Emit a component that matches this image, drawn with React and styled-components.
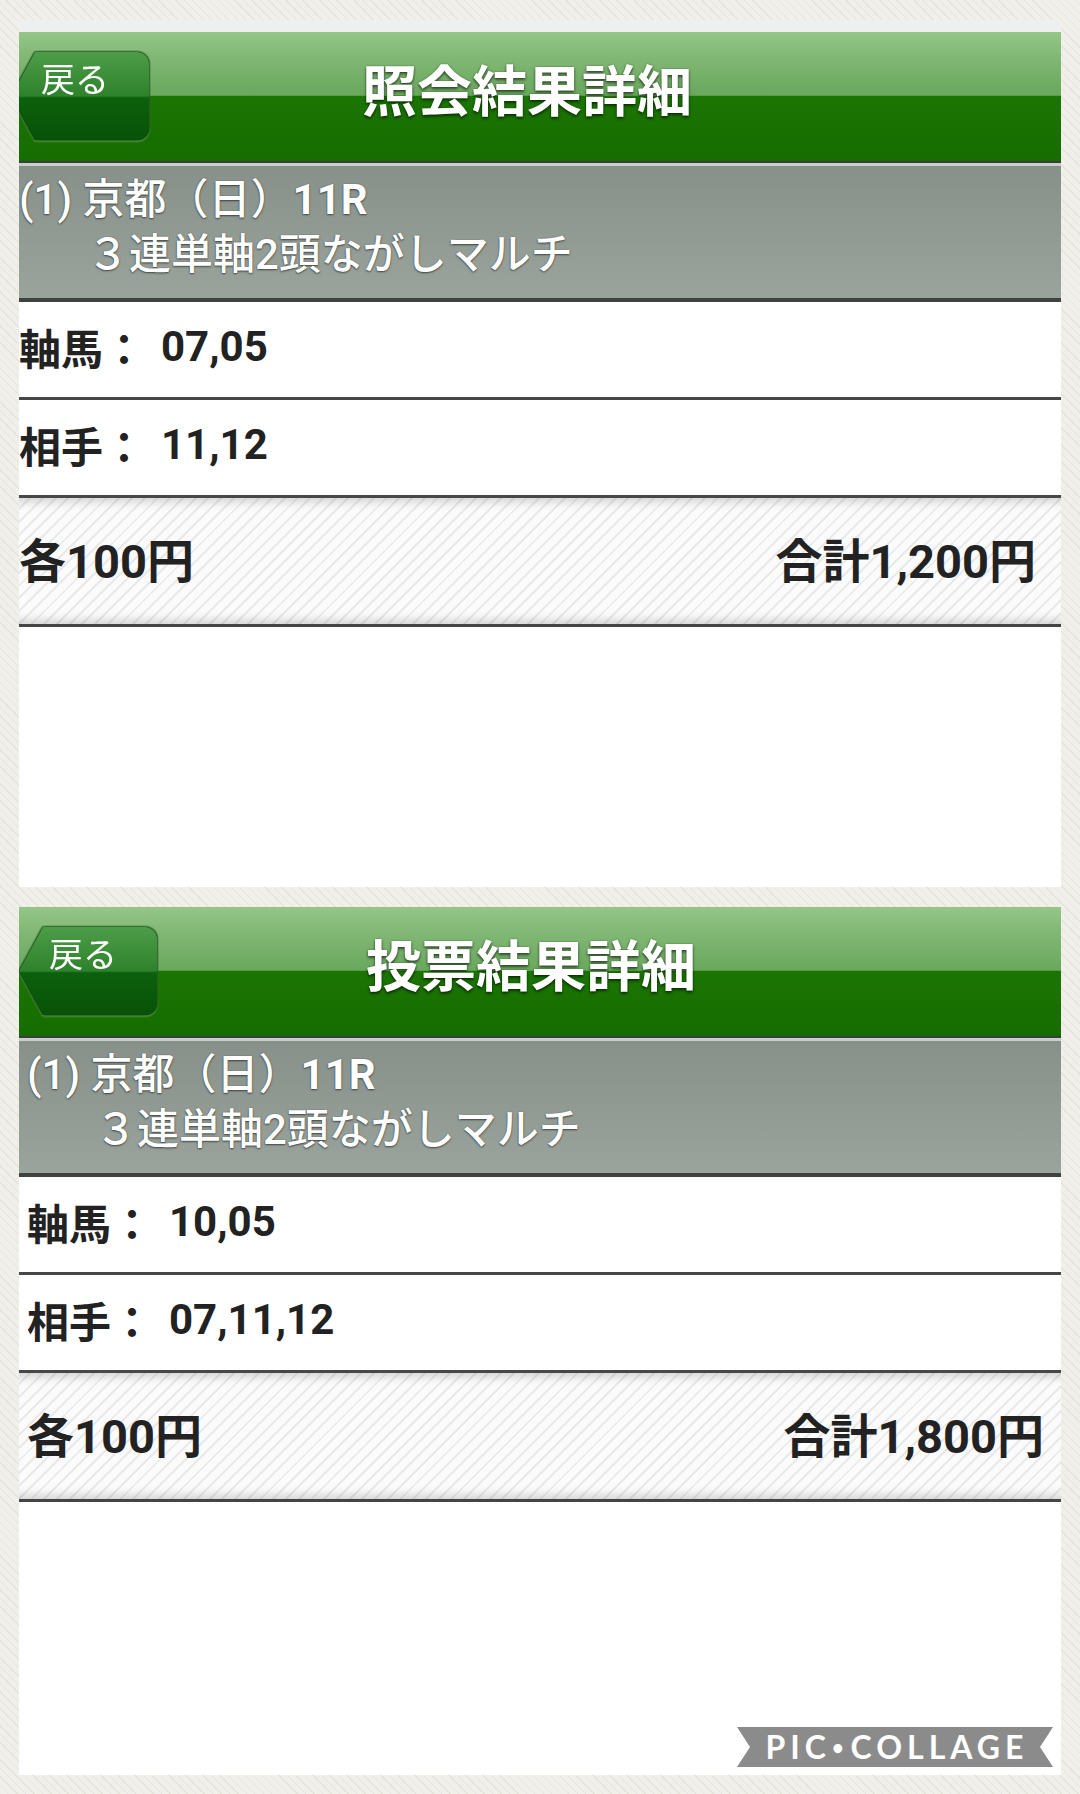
import styled, { createGlobalStyle } from 'styled-components';

const GlobalStyle = createGlobalStyle`
  *, *::before, *::after { box-sizing: border-box; }
  html, body { margin: 0; padding: 0; }
  body {
    background-color: #f0efe9;
    background-image: repeating-linear-gradient(45deg, #e5e3da 0 1px, transparent 1px 6px);
    font-family: Roboto, "Noto Sans CJK JP", sans-serif;
  }
`;

const tickets = [
  { title: '照会結果詳細', shift: 0, band: true, fill: 260, axis: '07,05', partner: '11,12', total: '1,200' },
  { title: '投票結果詳細', shift: 8, band: false, fill: 273, axis: '10,05', partner: '07,11,12', total: '1,800' },
];

const App = () => {
  return (
    <Page>
      <GlobalStyle />
      {tickets.map((t) => (
        <Panel key={t.title} $band={t.band}>
          <Header $shift={t.shift}>
            <BackWrap>
              <BackButton>戻る</BackButton>
            </BackWrap>
            <Title>{t.title}</Title>
          </Header>

          <Info $shift={t.shift}>
            <div>
              (1) 京都（日）<Strong>11R</Strong>
            </div>
            <SubLine>３連単軸2頭ながしマルチ</SubLine>
          </Info>

          <Row $shift={t.shift}>
            軸馬：<Value>{t.axis}</Value>
          </Row>
          <Row $shift={t.shift}>
            相手：<Value>{t.partner}</Value>
          </Row>

          <TotalRow $shift={t.shift}>
            <span>各100円</span>
            <span>合計{t.total}円</span>
          </TotalRow>

          <Filler $h={t.fill} />
        </Panel>
      ))}

      <Watermark>
        PIC<Dot>•</Dot>COLLAGE
      </Watermark>
    </Page>
  );
};

export default App;

const Page = styled.main`
  position: relative;
  width: 1080px;
  min-height: 1794px;
  padding: 20px 19px 0;
  display: flex;
  flex-direction: column;
  gap: 20px;
`;

const Panel = styled.section`
  background: #fff;
  overflow: hidden;
  border-top: ${(p) => (p.$band ? '12px solid #eef0ef' : 'none')};
`;

const Header = styled.header`
  height: 131px;
  display: grid;
  grid-template-columns: 1fr auto 1fr;
  align-items: start;
  padding: 20px 26px 0 ${(p) => p.$shift}px;
  background: linear-gradient(
    to bottom,
    #94c688 0%,
    #7fb673 22%,
    #69a85d 49%,
    #1b7503 50%,
    #166c00 100%
  );
  border-bottom: 2px solid #394039;
`;

const BackWrap = styled.div`
  justify-self: start;
  margin-left: -8px;
  filter: drop-shadow(0 0 1px #063206) drop-shadow(0 0 0.5px #063206) drop-shadow(0 1px 0 #6fb466);
`;

const BackButton = styled.button`
  display: flex;
  align-items: flex-start;
  width: 138px;
  height: 88px;
  padding: 8px 0 0 30px;
  border: none;
  border-radius: 0 12px 12px 0;
  clip-path: polygon(0 50%, 24px 0, 100% 0, 100% 100%, 24px 100%);
  background: linear-gradient(to bottom, #4d9c49 0%, #2f822c 50%, #0c600c 52%, #085208 100%);
  color: #fff;
  font-family: Roboto, "Noto Sans CJK JP", sans-serif;
  font-size: 34px;
  font-weight: 400;
  line-height: 40px;
`;

const Title = styled.h1`
  margin: 7px 0 0;
  color: #fff;
  font-size: 55px;
  font-weight: 700;
  line-height: 66px;
  text-shadow: 0 2px 3px rgba(0, 0, 0, 0.55), 0 0 2px rgba(0, 0, 0, 0.35);
`;

const Info = styled.div`
  height: 139px;
  padding: 8px 0 0 ${(p) => p.$shift}px;
  border-top: 3px solid #c9d0cb;
  border-bottom: 4px solid #3e433f;
  background: linear-gradient(to bottom, #879089, #9aa49d);
  color: #fff;
  font-size: 42px;
  font-weight: 500;
  line-height: 52px;
  white-space: nowrap;
  text-shadow: 0 1px 2px rgba(0, 0, 0, 0.55), 0 0 1px rgba(0, 0, 0, 0.45);
`;

const Strong = styled.span`
  font-weight: 700;
`;

const SubLine = styled.div`
  margin-top: 3px;
  padding-left: 68px;
`;

const Row = styled.div`
  height: 98px;
  display: flex;
  align-items: center;
  padding: 0 0 6px ${(p) => p.$shift}px;
  border-bottom: 3px solid #474747;
  color: #222;
  font-size: 42px;
  font-weight: 700;
`;

const Value = styled.span`
  margin-left: 16px;
`;

const TotalRow = styled.div`
  height: 129px;
  display: flex;
  justify-content: space-between;
  align-items: center;
  padding: 0 ${(p) => 25 - p.$shift}px 8px ${(p) => p.$shift}px;
  border-bottom: 3px solid #444;
  background-color: #fbfbfb;
  background-image: repeating-linear-gradient(-45deg, transparent 0 7px, #e9e9e9 7px 9px);
  box-shadow: inset 0 14px 10px -10px rgba(0, 0, 0, 0.16), inset 0 -14px 10px -10px rgba(0, 0, 0, 0.16);
  color: #222;
  font-size: 47px;
  font-weight: 700;
`;

const Filler = styled.div`
  height: ${(p) => p.$h}px;
  background: #fff;
`;

const Watermark = styled.div`
  position: absolute;
  left: 737px;
  top: 1727px;
  width: 316px;
  height: 40px;
  display: flex;
  align-items: center;
  justify-content: center;
  padding-left: 4px;
  background: #8b8b8b;
  clip-path: polygon(0 0, 100% 0, calc(100% - 13px) 50%, 100% 100%, 0 100%, 13px 50%);
  color: #fff;
  font-family: Lato, "DejaVu Sans", sans-serif;
  font-size: 32px;
  font-weight: 700;
  letter-spacing: 5px;
  line-height: 1;
`;

const Dot = styled.span`
  font-size: 20px;
  margin: 0 2px 0 1px;
`;
